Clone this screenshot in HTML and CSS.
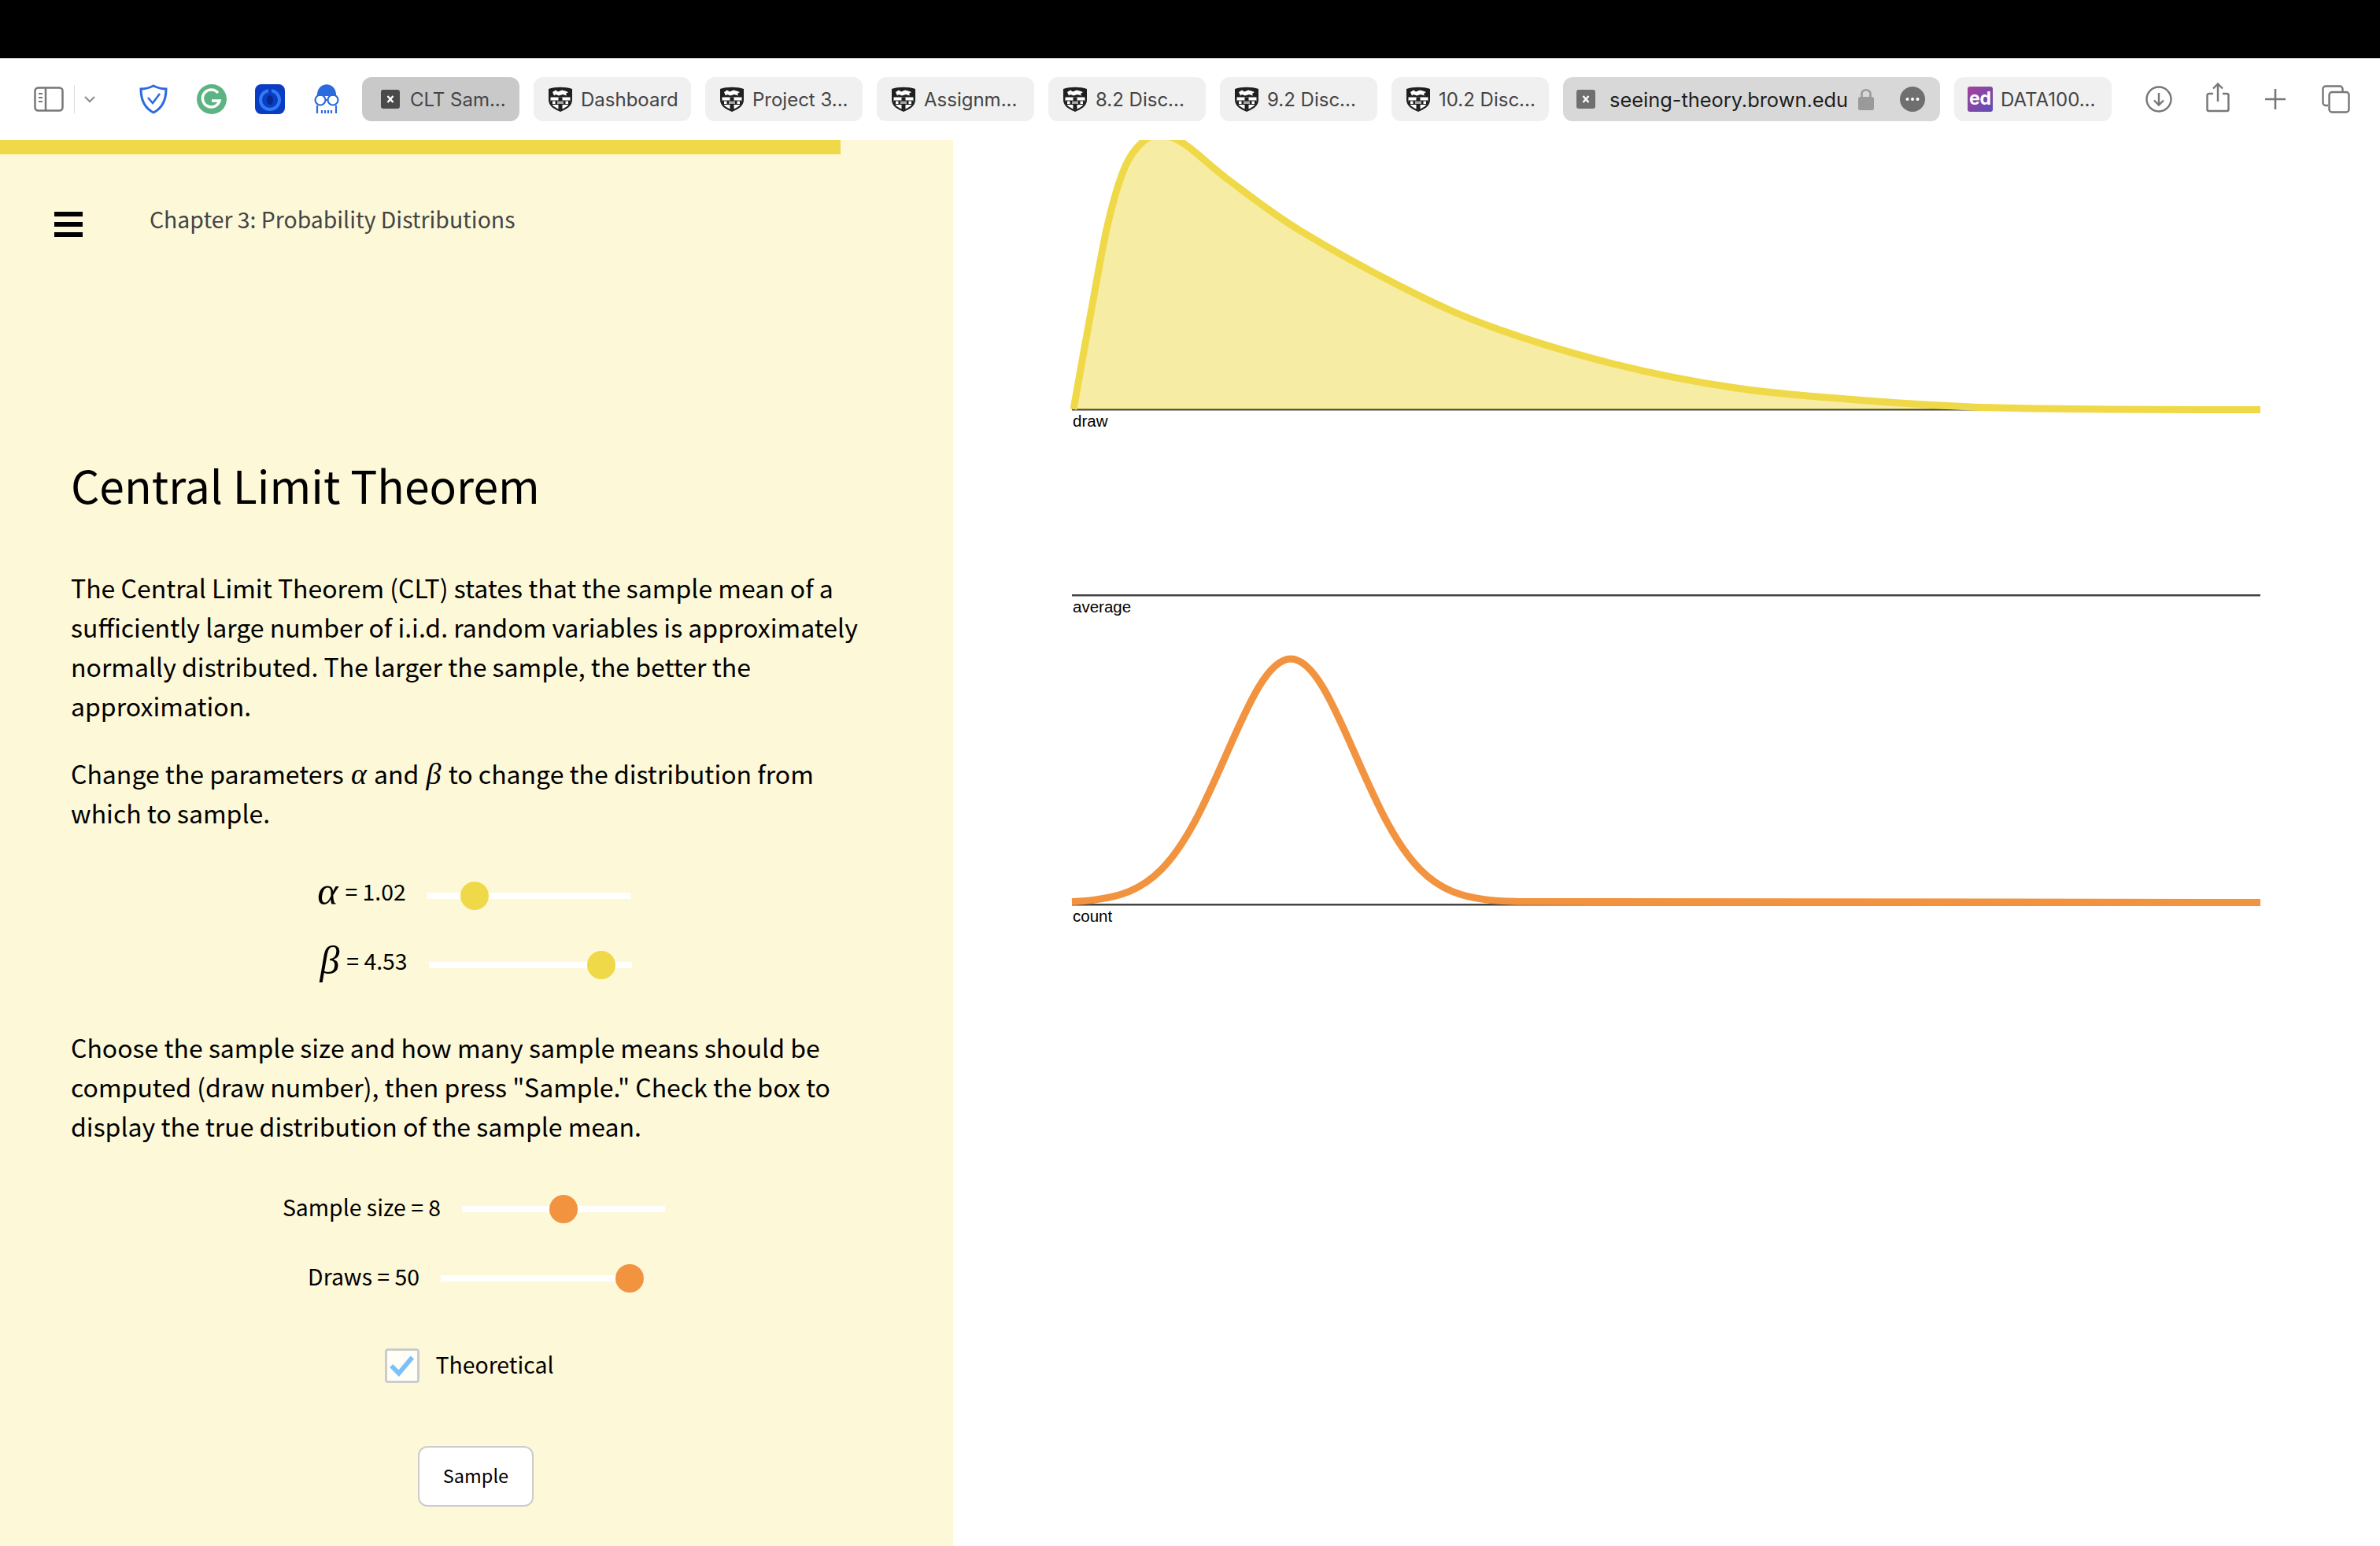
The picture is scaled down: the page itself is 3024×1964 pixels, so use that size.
FILE: index.html
```html
<!DOCTYPE html>
<html lang="en">
<head>
    <meta charset="UTF-8">
    <title>Central Limit Theorem</title>
    <link rel="stylesheet" href="styles.css">
</head>
<body>
    <svg class="defs" width="0" height="0">
        <symbol id="crest" viewBox="0 0 34 34">
            <path d="M2 4C10 1 24 1 32 4V18C32 26 24 30 17 33C10 30 2 26 2 18Z" fill="#1f1f1f"/>
            <path d="M7 8L11 5.500L14 7.500L19 5.500L23 6.500L27 8L24 10L25 12.500L20 11L15 12.500L11 11L9 12.500Z" fill="#fff"/>
            <path d="M4.500 14.500H29.500V18.500C29.500 25 23 28 17 30.500C11 28 4.500 25 4.500 18.500Z" fill="#fff"/>
            <rect x="14.500" y="14.500" width="5" height="16" fill="#1f1f1f"/>
            <rect x="4.500" y="18.500" width="25" height="5.500" fill="#1f1f1f"/>
            <rect x="13" y="19.500" width="8" height="3.500" fill="#a5a5a5"/>
            <rect x="7" y="19.500" width="3.500" height="3.500" fill="#fff"/>
            <rect x="23.500" y="19.500" width="3.500" height="3.500" fill="#fff"/>
        </symbol>
        <symbol id="close" viewBox="0 0 24 24">
            <rect width="24" height="24" rx="3" fill="currentColor"/>
            <path d="M8.500 8L15.500 16M15.500 8L8.500 16" stroke="#fff" stroke-width="2.400" fill="none"/>
        </symbol>
    </svg>

    <div class="top-black"></div>

    <header class="toolbar">
        <svg class="ico ico-sidebar" viewBox="0 0 38 32" fill="none" stroke="#777" stroke-width="2.500">
            <rect x="1.500" y="1.500" width="35" height="29" rx="4"/>
            <path d="M15 2V30"/>
            <path d="M6 9H11M6 14H11M6 19H11" stroke-width="2"/>
        </svg>
        <span class="divider"></span>
        <svg class="ico ico-chevron" viewBox="0 0 14 10" fill="none" stroke="#8a8a8a" stroke-width="2"><path d="M1 2L7 8L13 2"/></svg>

        <svg class="ico ico-ext ext-shield" viewBox="0 0 38 38" fill="none" stroke="#2c6ae0" stroke-width="3">
            <path d="M19 2C25 5 30 6 35 6C35 20 31 30 19 36C7 30 3 20 3 6C8 6 13 5 19 2Z"/>
            <path d="M12 17L18 24L27 12" stroke-width="2.600"/>
        </svg>
        <svg class="ico ico-ext ext-g" viewBox="0 0 38 38">
            <circle cx="19" cy="19" r="19" fill="#5bb482"/>
            <path d="M27 11A11 11 0 1 0 29 21H19" fill="none" stroke="#fff" stroke-width="3.500"/>
        </svg>
        <svg class="ico ico-ext ext-blue" viewBox="0 0 38 38">
            <rect width="38" height="38" rx="8" fill="#0a3cc4"/>
            <circle cx="19" cy="20" r="12" fill="none" stroke="#2f7bf0" stroke-width="4"/>
            <ellipse cx="19" cy="20" rx="4" ry="6" fill="#062a8c"/>
            <rect x="17" y="4" width="4" height="10" fill="#0a3cc4"/>
        </svg>
        <svg class="ico ext-glasses" viewBox="0 0 34 38" fill="none" stroke="#2c6ae0" stroke-width="2.200">
            <path d="M6 14C6 -3 28 -3 28 14Z" fill="#2c6ae0"/>
            <circle cx="9" cy="20" r="6.500"/>
            <circle cx="25" cy="20" r="6.500"/>
            <path d="M15 20H19M5 27V37M29 27V37"/>
            <path d="M11 37V33M15 37V33M19 37V33M23 37V33"/>
        </svg>

        <nav class="tabs">
            <div class="tab tab-current"><svg class="tab-close"><use href="#close"/></svg><span>CLT Sam...</span></div>
            <div class="tab"><svg class="tab-crest"><use href="#crest"/></svg><span>Dashboard</span></div>
            <div class="tab"><svg class="tab-crest"><use href="#crest"/></svg><span>Project 3...</span></div>
            <div class="tab"><svg class="tab-crest"><use href="#crest"/></svg><span>Assignm...</span></div>
            <div class="tab"><svg class="tab-crest"><use href="#crest"/></svg><span>8.2 Disc...</span></div>
            <div class="tab"><svg class="tab-crest"><use href="#crest"/></svg><span>9.2 Disc...</span></div>
            <div class="tab"><svg class="tab-crest"><use href="#crest"/></svg><span>10.2 Disc...</span></div>
            <div class="tab tab-address">
                <svg class="tab-close close-grey"><use href="#close"/></svg>
                <span class="address">seeing-theory.brown.edu</span>
                <svg class="ico ico-lock" viewBox="0 0 20 28">
                    <path d="M4.500 13V7.500C4.500 0.500 15.500 0.500 15.500 7.500V13" fill="none" stroke="#9a9a9a" stroke-width="2.600"/>
                    <rect y="11" width="20" height="17" rx="2.500" fill="#9a9a9a"/>
                </svg>
                <svg class="ico ico-more" viewBox="0 0 32 32">
                    <circle cx="16" cy="16" r="16" fill="#6f6f6f"/>
                    <circle cx="9.500" cy="16" r="2" fill="#fff"/><circle cx="16" cy="16" r="2" fill="#fff"/><circle cx="22.500" cy="16" r="2" fill="#fff"/>
                </svg>
            </div>
            <div class="tab tab-ed"><span class="ed-badge">ed</span><span>DATA100...</span></div>
        </nav>

        <div class="actions">
            <svg class="ico ico-download" viewBox="0 0 34 34" fill="none" stroke="#777" stroke-width="2.400">
                <circle cx="17" cy="17" r="15.500"/><path d="M17 9V24M11 18.500L17 24.500L23 18.500"/>
            </svg>
            <svg class="ico ico-share" viewBox="0 0 30 38" fill="none" stroke="#777" stroke-width="2.400">
                <path d="M9 14H3.500A2 2 0 0 0 1.500 16V34A2 2 0 0 0 3.500 36H26.500A2 2 0 0 0 28.500 34V16A2 2 0 0 0 26.500 14H21"/>
                <path d="M15 24V2M9 7.500L15 1.500L21 7.500"/>
            </svg>
            <svg class="ico ico-plus" viewBox="0 0 28 28" fill="none" stroke="#777" stroke-width="2.600"><path d="M14 1V27M1 14H27"/></svg>
            <svg class="ico ico-copies" viewBox="0 0 36 36" fill="none" stroke="#777" stroke-width="2.400">
                <path d="M8 26H5A3.500 3.500 0 0 1 1.500 22.500V5A3.500 3.500 0 0 1 5 1.500H23A3.500 3.500 0 0 1 26.500 5V9"/>
                <rect x="9.500" y="9" width="25" height="25.500" rx="3.500"/>
            </svg>
        </div>
    </header>

    <main class="page">
        <section class="panel">
            <div class="progress"></div>
            <div class="panel-body">
                <div class="chapter">
                    <div class="burger"><i></i><i></i><i></i></div>
                    <span>Chapter 3: Probability Distributions</span>
                </div>

                <h1>Central Limit Theorem</h1>

                <p class="first">The Central Limit Theorem (CLT) states that the sample mean of a sufficiently large number of i.i.d. random variables is approximately normally distributed. The larger the sample, the better the approximation.</p>
                <p class="second">Change the parameters <em class="greek-inline">α</em> and <em class="greek-inline">β</em> to change the distribution from which to sample.</p>

                <div class="sliders">
                    <div class="slider-row row-left">
                        <label class="slider-label math-label"><em class="greek">α</em><span>= 1.02</span></label>
                        <div class="track"><span class="thumb" style="left: 42px"></span></div>
                    </div>
                    <div class="slider-row">
                        <label class="slider-label math-label"><em class="greek">β</em><span>= 4.53</span></label>
                        <div class="track"><span class="thumb" style="left: 201px"></span></div>
                    </div>
                </div>

                <p class="third">Choose the sample size and how many sample means should be computed (draw number), then press "Sample." Check the box to display the true distribution of the sample mean.</p>

                <div class="sliders orange">
                    <div class="slider-row row-left">
                        <label class="slider-label">Sample size = 8</label>
                        <div class="track"><span class="thumb" style="left: 111px"></span></div>
                    </div>
                    <div class="slider-row">
                        <label class="slider-label">Draws = 50</label>
                        <div class="track"><span class="thumb" style="left: 222px"></span></div>
                    </div>
                </div>

                <div class="check-row">
                    <span class="checkbox">
                        <svg viewBox="0 0 30 26" fill="none" stroke="#7cc0fb" stroke-width="5.500"><path d="M2 13L11 22L27 3"/></svg>
                    </span>
                    <span class="check-text">Theoretical</span>
                </div>

                <div class="button-row"><button class="sample-btn" type="button">Sample</button></div>
            </div>
        </section>

        <section class="charts">
            <svg class="chart-svg" viewBox="1211 178 1813 1786">
                <!-- draw -->
                <rect x="1362" y="519" width="1510" height="2.500" fill="#444"/>
                <path class="pdf-fill" d="M1364 520C1367.500 500.500 1377.800 441.800 1385 403C1392.200 364.200 1399.700 318.700 1407 287C1414.300 255.300 1421.500 230.800 1429 213C1436.500 195.200 1444.500 186.800 1452 180C1459.500 173.200 1465.200 171.500 1474 172C1482.800 172.500 1490.200 173.300 1505 183C1519.800 192.700 1538.500 211.700 1563 230C1587.500 248.300 1614.800 270.200 1652 293C1689.200 315.800 1744.700 346.300 1786 367C1827.300 387.700 1855.500 401 1900 417C1944.500 433 2002 450.300 2053 463C2104 475.700 2155 485.500 2206 493C2257 500.500 2310 504 2359 508C2408 512 2450 514.500 2500 516.700L2530 520Z"/>
                <path class="pdf-line" d="M1364 520C1367.500 500.500 1377.800 441.800 1385 403C1392.200 364.200 1399.700 318.700 1407 287C1414.300 255.300 1421.500 230.800 1429 213C1436.500 195.200 1444.500 186.800 1452 180C1459.500 173.200 1465.200 171.500 1474 172C1482.800 172.500 1490.200 173.300 1505 183C1519.800 192.700 1538.500 211.700 1563 230C1587.500 248.300 1614.800 270.200 1652 293C1689.200 315.800 1744.700 346.300 1786 367C1827.300 387.700 1855.500 401 1900 417C1944.500 433 2002 450.300 2053 463C2104 475.700 2155 485.500 2206 493C2257 500.500 2310 504 2359 508C2408 512 2450 514.500 2500 516.700C2560 519.500 2700 520.500 2872 520.500"/>
                <text class="axis-label" x="1363" y="542">draw</text>

                <!-- average -->
                <rect x="1362" y="755" width="1510" height="2.500" fill="#444"/>
                <text class="axis-label" x="1363" y="778">average</text>

                <!-- count -->
                <rect x="1362" y="1148" width="1510" height="2.500" fill="#444"/>
                <path class="normal-line" d="M1362 1145.500C1372 1145 1385 1144 1394 1142.600C1407.700 1140.900 1421.300 1138 1435 1132.400C1448.700 1126.800 1462.300 1118.100 1476 1104.200C1489.700 1090.300 1503.300 1070.800 1517 1045.700C1530.700 1020.600 1544.300 989.800 1558 958.600C1571.700 927.400 1585.300 896 1599 873.300C1612.700 850.600 1626.300 837 1640 837C1653.700 837 1667.300 850.600 1681 873.300C1694.700 896 1708.300 927.400 1722 958.600C1735.700 989.800 1749.300 1020.600 1763 1045.700C1776.700 1070.800 1790.300 1090.300 1804 1104.200C1817.700 1118.100 1831.300 1126.800 1845 1132.400C1858.700 1138 1872.300 1140.900 1886 1142.600C1899.700 1144.300 1913.300 1144.900 1927 1145.300C2000 1146.500 2400 1146.500 2872 1146.500"/>
                <text class="axis-label" x="1363" y="1171">count</text>
            </svg>
        </section>
    </main>
</body>
</html>
```

FILE: styles.css
```css
* {
    box-sizing: border-box;
}

body {
    margin: 0;
    width: 3024px;
    height: 1964px;
    overflow: hidden;
    display: flex;
    flex-direction: column;
    background-color: #fff;
    font-family: "Noto Sans CJK SC", "Noto Sans", sans-serif;
    color: #000;
}

.defs {
    display: block;
    height: 0;
}

.top-black {
    height: 74px;
    background-color: #000;
}

/* browser bar */
.toolbar {
    height: 104px;
    display: flex;
    align-items: center;
    padding-left: 43px;
    background-color: #fff;
    font-family: Inter, "Liberation Sans", sans-serif;
}

.ico {
    display: block;
    flex: none;
}

.ico-sidebar {
    width: 38px;
    height: 32px;
}

.divider {
    width: 1px;
    height: 36px;
    margin-left: 13px;
    background-color: #ddd;
}

.ico-chevron {
    width: 14px;
    height: 10px;
    margin-left: 12px;
}

.ico-ext {
    width: 38px;
    height: 38px;
}

.ext-shield {
    margin-left: 55px;
}

.ext-g {
    margin-left: 36px;
}

.ext-blue {
    margin-left: 36px;
}

.ext-glasses {
    width: 34px;
    height: 38px;
    margin-left: 36px;
}

.tabs {
    display: flex;
    gap: 18px;
    margin-left: 28px;
}

.tab {
    width: 200px;
    height: 56px;
    display: flex;
    align-items: center;
    padding-left: 17px;
    border-radius: 12px;
    background-color: #f0f0f0;
    font-size: 24px;
    color: #444;
    white-space: nowrap;
}

.tab-current {
    padding-left: 24px;
    background-color: #c9c9c9;
}

.tab-close {
    width: 24px;
    height: 24px;
    flex: none;
    margin-right: 13px;
    color: #4a4a4a;
}

.tab-crest {
    width: 34px;
    height: 34px;
    flex: none;
    margin-right: 9px;
}

.tab-address {
    width: 479px;
    background-color: #d8d8d8;
    color: #1d1d1d;
}

.close-grey {
    margin-right: 18px;
    color: #6f6f6f;
}

.address {
    width: 301px;
    font-size: 25.400px;
}

.ico-lock {
    width: 20px;
    height: 28px;
    margin-left: 15px;
}

.ico-more {
    width: 32px;
    height: 32px;
    margin-left: 33px;
}

.ed-badge {
    width: 32px;
    height: 32px;
    flex: none;
    margin-right: 10px;
    border-radius: 3px;
    background: linear-gradient(135deg, #a8409a, #5b4fb4);
    color: #fff;
    font-weight: 700;
    font-size: 23px;
    line-height: 30px;
    text-align: center;
}

.actions {
    display: flex;
    align-items: center;
    margin-left: 43px;
}

.ico-download {
    width: 34px;
    height: 34px;
}

.ico-share {
    width: 30px;
    height: 38px;
    margin-left: 43px;
    margin-top: -4px;
}

.ico-plus {
    width: 28px;
    height: 28px;
    margin-left: 44px;
}

.ico-copies {
    width: 36px;
    height: 36px;
    margin-left: 45px;
}

/* page */
.page {
    flex: 1;
    display: flex;
    min-height: 0;
}

.panel {
    width: 1211px;
    flex: none;
    background-color: #fdf8d8;
}

.progress {
    width: 1068px;
    height: 18px;
    background-color: #f0d948;
}

.panel-body {
    padding: 57px 92px 0 90px;
}

.chapter {
    display: flex;
    align-items: flex-start;
    height: 50px;
    margin-left: -21px;
    font-size: 28.400px;
    line-height: 50px;
    color: #444;
}

.burger {
    width: 36px;
    margin-top: 16px;
    margin-right: 85px;
    display: flex;
    flex-direction: column;
    gap: 7px;
}

.burger i {
    display: block;
    height: 6px;
    background-color: #000;
}

h1 {
    margin: 272px 0 0;
    font-size: 57px;
    font-weight: 400;
    line-height: 80px;
}

p {
    margin: 0;
    font-size: 32px;
    line-height: 50px;
}

.first {
    margin-top: 66px;
}

.second {
    margin-top: 36px;
}

.third {
    margin-top: 57px;
}

.greek-inline {
    margin: 0 2px;
    font-family: "Liberation Serif", serif;
    font-size: 38px;
    line-height: 1;
}

.sliders {
    display: flex;
    flex-direction: column;
    gap: 44px;
    margin-top: 59px;
    --thumb: #f0d948;
}

.orange {
    --thumb: #f29340;
}

.slider-row {
    height: 44px;
    display: flex;
    align-items: center;
    justify-content: center;
    gap: 27px;
}

.row-left {
    padding-right: 5px;
}

.slider-label {
    display: flex;
    align-items: center;
    gap: 9px;
    padding-bottom: 6px;
    font-size: 28.400px;
    line-height: 44px;
    white-space: nowrap;
}

.math-label {
    padding-bottom: 12px;
}

.greek {
    font-family: "Liberation Serif", serif;
    font-size: 50px;
    line-height: 1;
}

.track {
    position: relative;
    width: 258px;
    height: 8px;
    background-color: #fff;
}

.thumb {
    position: absolute;
    top: -14px;
    width: 36px;
    height: 36px;
    border-radius: 50%;
    background-color: var(--thumb);
}

.check-row {
    height: 44px;
    display: flex;
    align-items: center;
    justify-content: center;
    gap: 20px;
    margin-top: 67px;
    padding-right: 16px;
    font-size: 28.400px;
}

.check-text {
    padding-bottom: 6px;
}

.checkbox {
    width: 44px;
    height: 44px;
    display: flex;
    align-items: center;
    justify-content: center;
    border: 3px solid #ccc;
    border-radius: 4px;
    background-color: #fffff8;
}

.checkbox svg {
    width: 32px;
    height: 28px;
}

.button-row {
    display: flex;
    justify-content: center;
    margin-top: 80px;
}

.sample-btn {
    width: 147px;
    height: 77px;
    padding: 0 0 3px;
    border: 2px solid #ccc;
    border-radius: 12px;
    background-color: #fff;
    font-family: inherit;
    font-size: 23.500px;
    color: #000;
}

/* charts */
.charts {
    flex: 1;
}

.chart-svg {
    display: block;
    width: 1813px;
    height: 1786px;
}

.pdf-fill {
    fill: #f0d948;
    fill-opacity: 0.5;
    stroke: none;
}

.pdf-line {
    fill: none;
    stroke: #f0d948;
    stroke-width: 9;
}

.normal-line {
    fill: none;
    stroke: #f29340;
    stroke-width: 9;
}

.axis-label {
    font-family: "Liberation Sans", Arial, sans-serif;
    font-size: 20.500px;
    fill: #000;
}
```
